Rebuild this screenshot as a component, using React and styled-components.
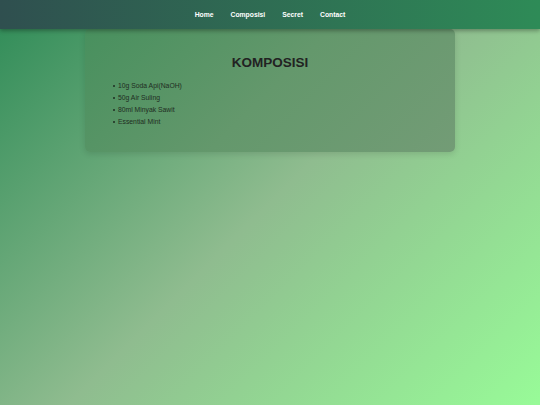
import React from 'react';
import styled, { createGlobalStyle } from 'styled-components';

const GlobalStyle = createGlobalStyle`
  html, body {
    margin: 0;
    padding: 0;
  }
  body {
    font-family: 'Liberation Sans', Arial, sans-serif;
    min-height: 100vh;
    background: linear-gradient(135deg, #2e8b57 0%, #8fbc8f 50%, #98fb98 100%);
    background-attachment: fixed;
  }
`;

const Page = styled.div`
  min-height: 100vh;
`;

const Nav = styled.nav`
  position: relative;
  z-index: 2;
  height: 29px;
  display: flex;
  justify-content: center;
  align-items: center;
  gap: 17px;
  background: linear-gradient(90deg, #2f4f4f 0%, #2e8b57 100%);
  box-shadow: 0 2px 4px rgba(0, 0, 0, 0.3);
`;

const NavLink = styled.a`
  color: #fff;
  font-size: 6.8px;
  font-weight: bold;
  text-decoration: none;
  cursor: pointer;
`;

const Card = styled.section`
  width: 370px;
  box-sizing: border-box;
  margin: 0 auto;
  padding: 26px 20px 24px;
  border-radius: 5px;
  background: linear-gradient(135deg, #48905e 0%, #64986c 50%, #739c76 100%);
  box-shadow: 0 2px 6px rgba(0, 0, 0, 0.12);
  color: #222;
`;

const Title = styled.h2`
  margin: 0 0 9px;
  text-align: center;
  font-size: 13.5px;
  line-height: 16px;
  font-weight: bold;
  color: #222;
`;

const List = styled.ul`
  margin: 0;
  padding-left: 13px;
  list-style: none;
`;

const Item = styled.li`
  position: relative;
  font-size: 6.8px;
  line-height: 12px;
  color: #1f2d22;

  &::before {
    content: '';
    position: absolute;
    left: -5px;
    top: 5px;
    width: 2px;
    height: 2px;
    border-radius: 50%;
    background: #1f2d22;
  }
`;

const links = ['Home', 'Composisi', 'Secret', 'Contact'];
const items = ['10g Soda Api(NaOH)', '50g Air Suling', '80ml Minyak Sawit', 'Essential Mint'];

export default function App() {
  return (
    <Page>
      <GlobalStyle />
      <Nav>
        {links.map((l) => (
          <NavLink key={l}>{l}</NavLink>
        ))}
      </Nav>
      <Card>
        <Title>KOMPOSISI</Title>
        <List>
          {items.map((i) => (
            <Item key={i}>{i}</Item>
          ))}
        </List>
      </Card>
    </Page>
  );
}
